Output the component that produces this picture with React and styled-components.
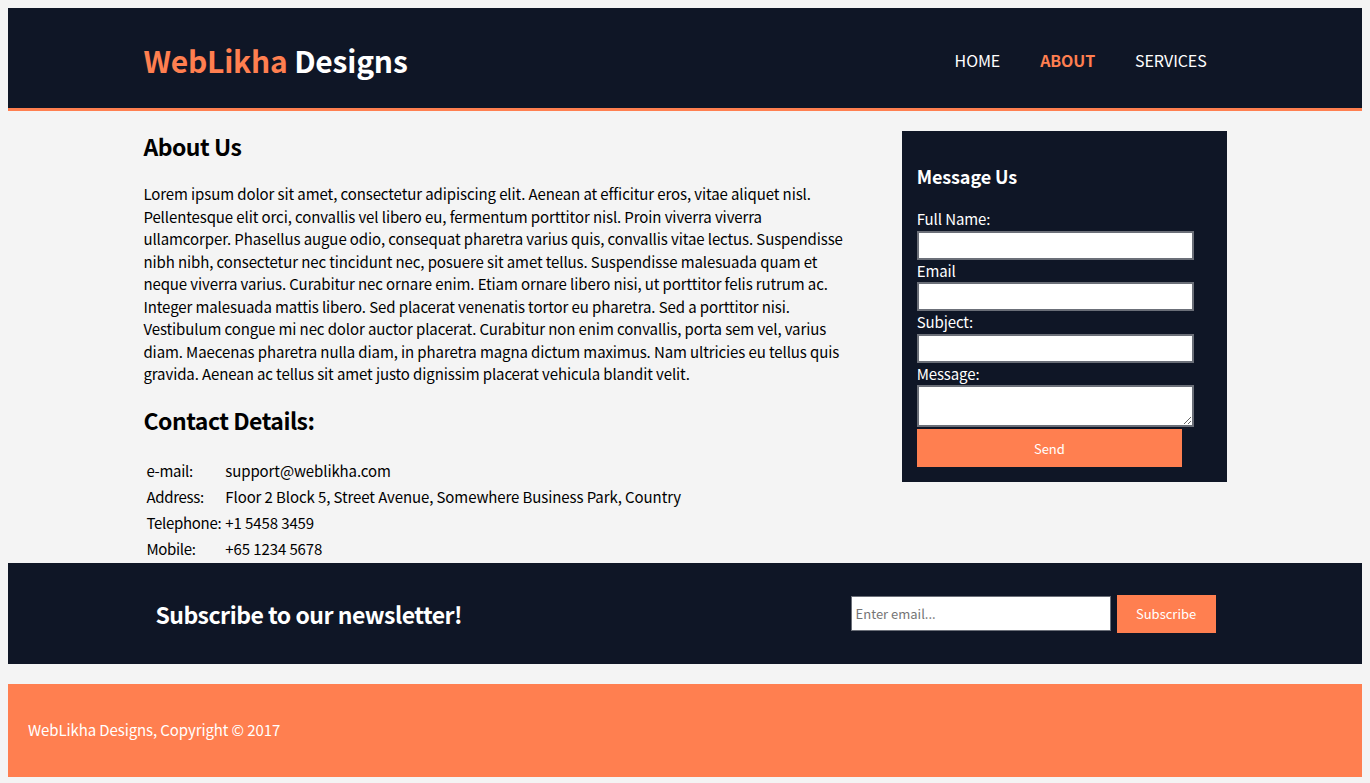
import React from 'react';
import styled, { createGlobalStyle } from 'styled-components';

const colors = {
  navy: '#0f1626',
  coral: '#ff7f50',
  page: '#f4f4f4',
  white: '#ffffff',
};

const font = '"Noto Sans CJK KR", "Noto Sans", sans-serif';

const GlobalStyle = createGlobalStyle`
  body {
    margin: 8px;
    background-color: ${colors.page};
    font-family: ${font};
    font-size: 15px;
    line-height: 1.5;
    letter-spacing: -0.1px;
    color: #000;
  }
`;

const details = [
  ['e-mail:', 'support@weblikha.com'],
  ['Address:', 'Floor 2 Block 5, Street Avenue, Somewhere Business Park, Country'],
  ['Telephone:', '+1 5458 3459'],
  ['Mobile:', '+65 1234 5678'],
];

const fields = [
  { label: 'Full Name:', type: 'text' },
  { label: 'Email', type: 'email' },
  { label: 'Subject:', type: 'text' },
];

const App = () => {
  return (
    <>
      <GlobalStyle />
      <Header>
        <Container>
          <Logo>
            <span>WebLikha</span> Designs
          </Logo>
          <Nav>
            <NavItem>HOME</NavItem>
            <NavItem active>ABOUT</NavItem>
            <NavItem>SERVICES</NavItem>
          </Nav>
        </Container>
      </Header>

      <Content>
        <Article>
          <Title>About Us</Title>
          <Paragraph>
            Lorem ipsum dolor sit amet, consectetur adipiscing elit. Aenean at efficitur eros, vitae
            aliquet nisl. Pellentesque elit orci, convallis vel libero eu, fermentum porttitor nisl.
            Proin viverra viverra ullamcorper. Phasellus augue odio, consequat pharetra varius quis,
            convallis vitae lectus. Suspendisse nibh nibh, consectetur nec tincidunt nec, posuere sit
            amet tellus. Suspendisse malesuada quam et neque viverra varius. Curabitur nec ornare
            enim. Etiam ornare libero nisi, ut porttitor felis rutrum ac. Integer malesuada mattis
            libero. Sed placerat venenatis tortor eu pharetra. Sed a porttitor nisi. Vestibulum
            congue mi nec dolor auctor placerat. Curabitur non enim convallis, porta sem vel, varius
            diam. Maecenas pharetra nulla diam, in pharetra magna dictum maximus. Nam ultricies eu
            tellus quis gravida. Aenean ac tellus sit amet justo dignissim placerat vehicula blandit
            velit.
          </Paragraph>
          <Title>Contact Details:</Title>
          <DetailTable>
            <tbody>
              {details.map(([key, value]) => (
                <tr key={key}>
                  <KeyCell>{key}</KeyCell>
                  <td>{value}</td>
                </tr>
              ))}
            </tbody>
          </DetailTable>
        </Article>

        <Aside>
          <AsideTitle>Message Us</AsideTitle>
          <Form onSubmit={(e) => e.preventDefault()}>
            {fields.map((f) => (
              <React.Fragment key={f.label}>
                <Label>{f.label}</Label>
                <Input type={f.type} />
              </React.Fragment>
            ))}
            <Label>Message:</Label>
            <TextArea />
            <SendButton type="submit">Send</SendButton>
          </Form>
        </Aside>
      </Content>

      <Newsletter>
        <NewsletterInner>
          <NewsletterTitle>Subscribe to our newsletter!</NewsletterTitle>
          <SubscribeForm onSubmit={(e) => e.preventDefault()}>
            <EmailInput type="email" placeholder="Enter email..." />
            <SubscribeButton type="submit">Subscribe</SubscribeButton>
          </SubscribeForm>
        </NewsletterInner>
      </Newsletter>

      <Footer>
        <p>WebLikha Designs, Copyright &copy; 2017</p>
      </Footer>
    </>
  );
};

export default App;

const Header = styled.header`
  background-color: ${colors.navy};
  border-bottom: 3px solid ${colors.coral};
  color: ${colors.white};
`;

const Container = styled.div`
  width: 80%;
  margin: 0 auto;
  height: 100px;
  padding-top: 4px;
  box-sizing: border-box;
  display: flex;
  flex-direction: row;
  justify-content: space-between;
  align-items: center;
`;

const Logo = styled.h1`
  margin: 0;
  font-size: 30px;
  font-weight: 700;
  line-height: 40px;
  letter-spacing: -0.2px;
  color: ${colors.white};
  span {
    color: ${colors.coral};
  }
`;

const Nav = styled.ul`
  list-style: none;
  margin: 0;
  padding: 0;
  display: flex;
  flex-direction: row;
`;

const NavItem = styled.li`
  padding: 0 20px;
  font-size: 16px;
  line-height: 22px;
  color: ${(props) => (props.active ? colors.coral : colors.white)};
  font-weight: ${(props) => (props.active ? 700 : 400)};
`;

const Content = styled.main`
  width: 80%;
  margin: 20px auto 0;
  display: flex;
  flex-direction: row;
  justify-content: space-between;
  align-items: flex-start;
`;

const Article = styled.article`
  width: 65%;
`;

const Title = styled.h1`
  margin: 0 0 22px;
  font-size: 23px;
  line-height: 30px;
  letter-spacing: -0.5px;
  font-weight: 700;
`;

const Paragraph = styled.p`
  margin: 0 0 19px;
`;

const DetailTable = styled.table`
  border-spacing: 2px;
  td {
    padding: 1px;
    line-height: 22.2px;
    vertical-align: middle;
  }
`;

const KeyCell = styled.td`
  width: 74px;
  white-space: nowrap;
  letter-spacing: -0.3px;
`;

const Aside = styled.aside`
  width: 30%;
  box-sizing: border-box;
  padding: 15px;
  background-color: ${colors.navy};
  color: ${colors.white};
`;

const AsideTitle = styled.h3`
  margin: 19px 0 21px;
  font-size: 18px;
  line-height: 22px;
  font-weight: 700;
`;

const Form = styled.form`
  display: flex;
  flex-direction: column;
  align-items: flex-start;
`;

const Label = styled.label`
  display: block;
  line-height: 22.5px;
`;

const Input = styled.input`
  width: 90%;
  box-sizing: content-box;
  height: 21px;
  padding: 2px 4px;
  margin: 0;
  border: 2px solid #6b6f78;
  background: ${colors.white};
`;

const TextArea = styled.textarea`
  width: 90%;
  height: 34px;
  padding: 2px 4px;
  margin: 0;
  border: 2px solid #6b6f78;
  background: ${colors.white};
  font-family: ${font};
`;

const SendButton = styled.button`
  width: 90%;
  height: 38px;
  margin-top: 2px;
  border: none;
  background-color: ${colors.coral};
  color: ${colors.white};
  font-family: ${font};
  font-size: 13px;
`;

const Newsletter = styled.section`
  background-color: ${colors.navy};
  color: ${colors.white};
`;

const NewsletterInner = styled.div`
  width: 80%;
  height: 101px;
  margin: 0 auto;
  padding: 0 11px 0 12px;
  box-sizing: border-box;
  display: flex;
  flex-direction: row;
  justify-content: space-between;
  align-items: center;
`;

const NewsletterTitle = styled.h1`
  margin: 0;
  font-size: 23px;
  line-height: 30px;
  letter-spacing: -0.5px;
  font-weight: 700;
`;

const SubscribeForm = styled.form`
  display: flex;
  flex-direction: row;
  align-items: center;
  gap: 6px;
`;

const EmailInput = styled.input`
  width: 260px;
  box-sizing: border-box;
  height: 35px;
  padding: 0 4px;
  margin: 0;
  border: 1px solid #6b6f78;
  font-family: ${font};
  font-size: 13px;
  &::placeholder {
    color: #757575;
  }
`;

const SubscribeButton = styled.button`
  width: 99px;
  height: 38px;
  border: none;
  background-color: ${colors.coral};
  color: ${colors.white};
  font-family: ${font};
  font-size: 13px;
`;

const Footer = styled.footer`
  margin-top: 20px;
  padding: 20px;
  background-color: ${colors.coral};
  color: ${colors.white};
  p {
    margin: 15px 0;
  }
`;
